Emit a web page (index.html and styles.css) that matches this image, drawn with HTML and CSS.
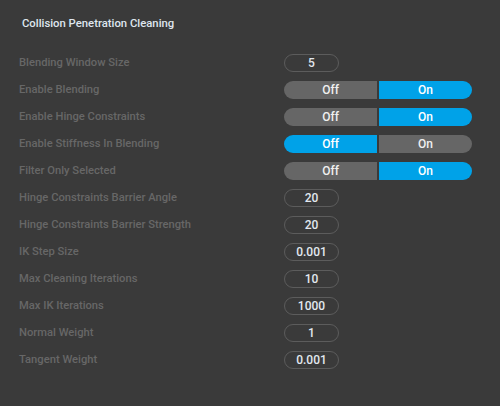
FILE: index.html
```html
<!DOCTYPE html>
<html>
<head>
<meta charset="utf-8">
<link rel="stylesheet" href="styles.css">
</head>
<body>
<div class="panel">
  <div class="title">Collision Penetration Cleaning</div>
  <div class="rows">
    <div class="row"><span class="label">Blending Window Size</span><span class="num">5</span></div>
    <div class="row"><span class="label">Enable Blending</span><span class="toggle"><span class="opt">Off</span><span class="opt active">On</span></span></div>
    <div class="row"><span class="label">Enable Hinge Constraints</span><span class="toggle"><span class="opt">Off</span><span class="opt active">On</span></span></div>
    <div class="row"><span class="label">Enable Stiffness In Blending</span><span class="toggle"><span class="opt active">Off</span><span class="opt">On</span></span></div>
    <div class="row"><span class="label">Filter Only Selected</span><span class="toggle"><span class="opt">Off</span><span class="opt active">On</span></span></div>
    <div class="row"><span class="label">Hinge Constraints Barrier Angle</span><span class="num">20</span></div>
    <div class="row"><span class="label">Hinge Constraints Barrier Strength</span><span class="num">20</span></div>
    <div class="row"><span class="label">IK Step Size</span><span class="num">0.001</span></div>
    <div class="row"><span class="label">Max Cleaning Iterations</span><span class="num">10</span></div>
    <div class="row"><span class="label">Max IK Iterations</span><span class="num">1000</span></div>
    <div class="row"><span class="label">Normal Weight</span><span class="num">1</span></div>
    <div class="row"><span class="label">Tangent Weight</span><span class="num">0.001</span></div>
  </div>
</div>
</body>
</html>
```
FILE: styles.css
```css
html, body {
  margin: 0;
  padding: 0;
  background: #3a3a3a;
  width: 500px;
  height: 406px;
  overflow: hidden;
}
.panel {
  font-family: Roboto, "Liberation Sans", sans-serif;
  padding: 16px 0 0 0;
}
.title {
  padding-left: 22px;
  font-size: 11.3px;
  font-weight: 500;
  line-height: 16px;
  color: #dfe6ee;
}
.rows {
  margin-top: 17px;
  padding-left: 19px;
  display: flex;
  flex-direction: column;
}
.row {
  display: grid;
  grid-template-columns: 265px auto;
  align-items: center;
  height: 27px;
}
.label {
  font-size: 11.2px;
  font-weight: 500;
  color: #676767;
}
.num {
  box-sizing: border-box;
  width: 55px;
  height: 18px;
  border: 1px solid #5c5c5c;
  border-radius: 9px;
  display: flex;
  align-items: center;
  justify-content: center;
  font-size: 12px;
  font-weight: 500;
  color: #e2e8ef;
}
.toggle {
  width: 188px;
  height: 18px;
  display: flex;
  gap: 2px;
  border-radius: 9px;
  overflow: hidden;
}
.opt {
  flex: 1;
  background: #666666;
  color: #f0f0f0;
  font-size: 12px;
  font-weight: 500;
  display: flex;
  align-items: center;
  justify-content: center;
}
.opt.active {
  background: #00a2e8;
  color: #ffffff;
}
```
